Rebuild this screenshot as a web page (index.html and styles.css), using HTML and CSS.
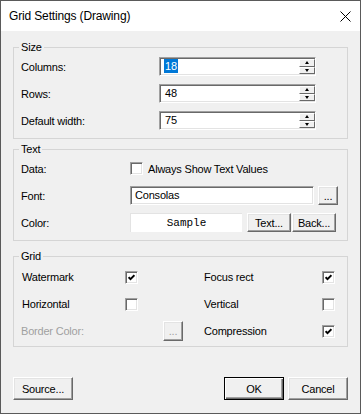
FILE: index.html
```html
<!DOCTYPE html>
<html lang="en">
<head>
  <meta charset="UTF-8" />
  <title>Grid Settings (Drawing)</title>
  <link rel="stylesheet" href="styles.css">
</head>
<body>
  <div class="window">
    <div class="titlebar">
      <span class="title">Grid Settings (Drawing)</span>
      <svg class="close" width="11" height="11" viewBox="0 0 11 11">
        <path d="M0.5 0.5L10.5 10.5M10.5 0.5L0.5 10.5" stroke="#000" stroke-width="1" fill="none"/>
      </svg>
    </div>

    <div class="content">
      <fieldset class="group size">
        <legend>Size</legend>
        <div class="row">
          <span class="label">Columns:</span>
          <div class="spin sunken">
            <span class="field"><span class="sel">18</span></span>
            <span class="arrows"><span class="arr up"></span><span class="arr down"></span></span>
          </div>
        </div>
        <div class="row">
          <span class="label">Rows:</span>
          <div class="spin sunken">
            <span class="field">48</span>
            <span class="arrows"><span class="arr up"></span><span class="arr down"></span></span>
          </div>
        </div>
        <div class="row">
          <span class="label">Default width:</span>
          <div class="spin sunken">
            <span class="field">75</span>
            <span class="arrows"><span class="arr up"></span><span class="arr down"></span></span>
          </div>
        </div>
      </fieldset>

      <fieldset class="group text">
        <legend>Text</legend>
        <div class="row">
          <span class="label">Data:</span>
          <span class="check sunken"></span>
          <span class="check-text">Always Show Text Values</span>
        </div>
        <div class="row">
          <span class="label">Font:</span>
          <span class="edit sunken">Consolas</span>
          <button class="btn dots">...</button>
        </div>
        <div class="row">
          <span class="label">Color:</span>
          <span class="sample">Sample</span>
          <button class="btn color-btn">Text...</button>
          <button class="btn color-btn back">Back...</button>
        </div>
      </fieldset>

      <fieldset class="group options">
        <legend>Grid</legend>
        <div class="opts">
          <span class="opt-label">Watermark</span>
          <span class="check sunken"><svg width="7" height="7" viewBox="0 0 7 7"><path d="M0.6 3.2L2.5 5.2L6.4 1.2" stroke="#000" stroke-width="1.9" fill="none"/></svg></span>
          <span class="opt-label">Focus rect</span>
          <span class="check sunken"><svg width="7" height="7" viewBox="0 0 7 7"><path d="M0.6 3.2L2.5 5.2L6.4 1.2" stroke="#000" stroke-width="1.9" fill="none"/></svg></span>

          <span class="opt-label">Horizontal</span>
          <span class="check sunken"></span>
          <span class="opt-label">Vertical</span>
          <span class="check sunken"></span>

          <span class="disabled">Border Color:</span>
          <button class="btn dots off" disabled>...</button>
          <span class="opt-label">Compression</span>
          <span class="check sunken"><svg width="7" height="7" viewBox="0 0 7 7"><path d="M0.6 3.2L2.5 5.2L6.4 1.2" stroke="#000" stroke-width="1.9" fill="none"/></svg></span>
        </div>
      </fieldset>

      <div class="footer">
        <button class="btn wide">Source...</button>
        <div class="actions">
          <button class="btn wide default">OK</button>
          <button class="btn wide">Cancel</button>
        </div>
      </div>
    </div>
  </div>
</body>
</html>
```

FILE: styles.css
```css
html, body {
  margin: 0;
  padding: 0;
  background: #fff;
  font-family: "Liberation Sans", Arial, sans-serif;
  font-size: 11px;
  letter-spacing: -0.2px;
  color: #000;
}

.window {
  width: 361px;
  height: 414px;
  box-sizing: border-box;
  border: 1px solid #5a5a5a;
  background: #f0f0f0;
  display: flex;
  flex-direction: column;
}

.titlebar {
  height: 30px;
  flex: none;
  background: #fff;
  display: flex;
  align-items: center;
  justify-content: space-between;
  padding: 0 9px 0 8px;
}

.title {
  font-size: 12px;
  letter-spacing: -0.15px;
}

.content {
  padding: 10px 12px 0 12px;
}

/* group boxes */
.group {
  margin: 0;
  padding: 3px 7px 8px;
  border: 1px solid #d5d5d5;
  min-width: 0;
}

.group legend {
  padding: 0 2px;
  margin-left: -2px;
  line-height: 13px;
}

.text {
  margin-top: 4px;
}

.options {
  margin-top: 9px;
  padding-top: 4px;
  padding-bottom: 5px;
}

.row {
  display: flex;
  align-items: center;
  height: 19px;
}

.row + .row {
  margin-top: 8px;
}

.size .label {
  width: 138px;
}

.text .label {
  width: 109px;
}

/* 3d borders */
.sunken {
  box-sizing: border-box;
  background: #fff;
  border: 1px solid;
  border-color: #a0a0a0 #fff #fff #a0a0a0;
  box-shadow: inset 1px 1px #696969, inset -1px -1px #e3e3e3;
}

.btn {
  box-sizing: border-box;
  margin: 0;
  padding: 0;
  font: inherit;
  letter-spacing: inherit;
  color: #000;
  background: #f0f0f0;
  border: 1px solid;
  border-color: #fff #696969 #696969 #fff;
  box-shadow: inset -1px -1px #a0a0a0, inset 1px 1px #e3e3e3;
  height: 19px;
}

/* spin edits */
.spin {
  width: 157px;
  height: 19px;
  display: flex;
}

.field {
  flex: 1;
  padding-left: 5px;
  line-height: 17px;
}

.sel {
  background: #0078d7;
  color: #fff;
  padding: 1px 1px;
  margin-left: -1px;
}

.arrows {
  width: 16px;
  display: flex;
  flex-direction: column;
  padding: 1px 0 1px;
  margin-right: 0;
}

.arr {
  flex: 1;
  box-sizing: border-box;
  background: #f0f0f0;
  border: 1px solid;
  border-color: #fff #696969 #696969 #fff;
  display: flex;
  align-items: center;
  justify-content: center;
}

.arr::after {
  content: "";
  border-left: 2.5px solid transparent;
  border-right: 2.5px solid transparent;
}

.up::after {
  border-bottom: 3px solid #000;
}

.down::after {
  border-top: 3px solid #000;
}

/* text group */
.check {
  width: 13px;
  height: 13px;
  flex: none;
  display: flex;
  align-items: center;
  justify-content: center;
}

.check-text {
  margin-left: 5px;
}

.edit {
  width: 184px;
  height: 19px;
  padding-left: 4px;
  line-height: 17px;
}

.dots {
  width: 20px;
  margin-left: 4px;
}

.sample {
  width: 112px;
  height: 19px;
  box-sizing: border-box;
  background: #fff;
  border-top: 1px solid #e3e3e3;
  border-left: 1px solid #e3e3e3;
  text-align: center;
  line-height: 18px;
  font-family: "Liberation Mono", "DejaVu Sans Mono", monospace;
  font-size: 11px;
  letter-spacing: 0;
}

.color-btn {
  width: 44px;
  margin-left: 5px;
}

.color-btn.back {
  margin-left: 1px;
}

/* grid group */
.opts {
  display: grid;
  grid-template-columns: 104px 78px 119px 13px;
  grid-auto-rows: 20px;
  row-gap: 7px;
  align-items: center;
}

.opt-label {
  padding-left: 1px;
}

.disabled {
  color: #a0a0a0;
}

.dots.off {
  margin-left: 38px;
  height: 20px;
  color: #a0a0a0;
}

/* footer buttons */
.footer {
  display: flex;
  justify-content: space-between;
  margin-top: 30px;
}

.actions {
  display: flex;
  gap: 4px;
}

.btn.wide {
  width: 60px;
  height: 23px;
}

.btn.default {
  border: 1px solid #000;
  box-shadow: inset 1px 1px #fff, inset -1px -1px #696969, inset -2px -2px #a0a0a0;
}
```
